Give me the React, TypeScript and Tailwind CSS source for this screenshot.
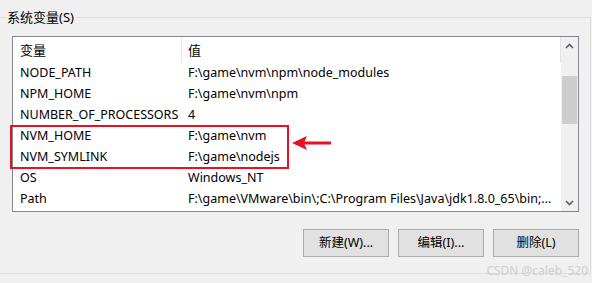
import React from 'react';

const rows: [string, string][] = [
  ['NODE_PATH', 'F:\\game\\nvm\\npm\\node_modules'],
  ['NPM_HOME', 'F:\\game\\nvm\\npm'],
  ['NUMBER_OF_PROCESSORS', '4'],
  ['NVM_HOME', 'F:\\game\\nvm'],
  ['NVM_SYMLINK', 'F:\\game\\nodejs'],
  ['OS', 'Windows_NT'],
  ['Path', 'F:\\game\\VMware\\bin\\;C:\\Program Files\\Java\\jdk1.8.0_65\\bin;...'],
];

const font = "font-['Noto_Sans','Noto_Sans_CJK_SC',sans-serif]";

export default function App() {
  return (
    <div className={`relative w-[592px] h-[283px] overflow-hidden bg-[#f0f0f0] pt-[17px] text-[12.5px] text-black ${font}`}>
      {/* group box */}
      <div className="relative ml-[-2px] w-[593px] h-[257px] border border-[#dcdcdc]">
        <span className="absolute left-[8px] top-[-10px] bg-[#f0f0f0] pr-[3px] leading-[18px] text-[13px]">
          系统变量(S)
        </span>

        {/* list */}
        <div className="ml-[13px] mt-[18px] flex w-[567px] h-[176px] border border-[#828790] bg-white">
          <div className="flex-1 flex flex-col">
            {/* header */}
            <div className="flex h-[26px]">
              <div className="w-[169px] pl-[7px] pt-[2px] border-r border-[#e5e5e5] h-full flex items-center text-[13px]">变量</div>
              <div className="flex-1 pl-[6px] pt-[2px] border-r border-[#e5e5e5] h-full flex items-center text-[13px]">值</div>
            </div>
            {rows.map(([k, v]) => (
              <div key={k} className="flex h-[21px] items-center whitespace-nowrap">
                <div className="w-[169px] pl-[7px]">{k}</div>
                <div className="flex-1 pl-[6px]">{v}</div>
              </div>
            ))}
          </div>
          {/* scrollbar */}
          <div className="w-[17px] flex flex-col items-center bg-[#f0f0f0]">
            <div className="h-[17px] w-full flex items-center justify-center">
              <svg width="9" height="6" viewBox="0 0 9 6">
                <path d="M1 5 L4.5 1.5 L8 5" fill="none" stroke="#606060" strokeWidth="1.6" />
              </svg>
            </div>
            <div className="mt-[22px] w-[15px] h-[48px] bg-[#cdcdcd]" />
            <div className="flex-1" />
            <div className="h-[17px] w-full flex items-center justify-center">
              <svg width="9" height="6" viewBox="0 0 9 6">
                <path d="M1 1 L4.5 4.5 L8 1" fill="none" stroke="#606060" strokeWidth="1.6" />
              </svg>
            </div>
          </div>
        </div>

        {/* buttons */}
        <div className="mt-[17px] mr-[11px] flex justify-end gap-[9px]">
          {['新建(W)...', '编辑(I)...', '删除(L)'].map((t) => (
            <button
              key={t}
              className="w-[86px] h-[28px] border border-[#adadad] bg-[#e1e1e1] text-[12.5px]"
            >
              {t}
            </button>
          ))}
        </div>
      </div>

      {/* highlight */}
      <div className="absolute left-[10px] top-[125px] w-[279px] h-[44px] border-2 border-[#e81123]" />
      <svg className="absolute left-[291px] top-[135px]" width="42" height="16" viewBox="0 0 42 16">
        <path d="M1 8 L16 1 L13.5 6.5 L40 6.5 L40 9.5 L13.5 9.5 L16 15 Z" fill="#e81123" />
      </svg>

      {/* watermark */}
      <span className="absolute right-[4px] top-[264px] text-[12px] leading-[14px] text-[#cfcfcf]">
        CSDN @caleb_520
      </span>
    </div>
  );
}
